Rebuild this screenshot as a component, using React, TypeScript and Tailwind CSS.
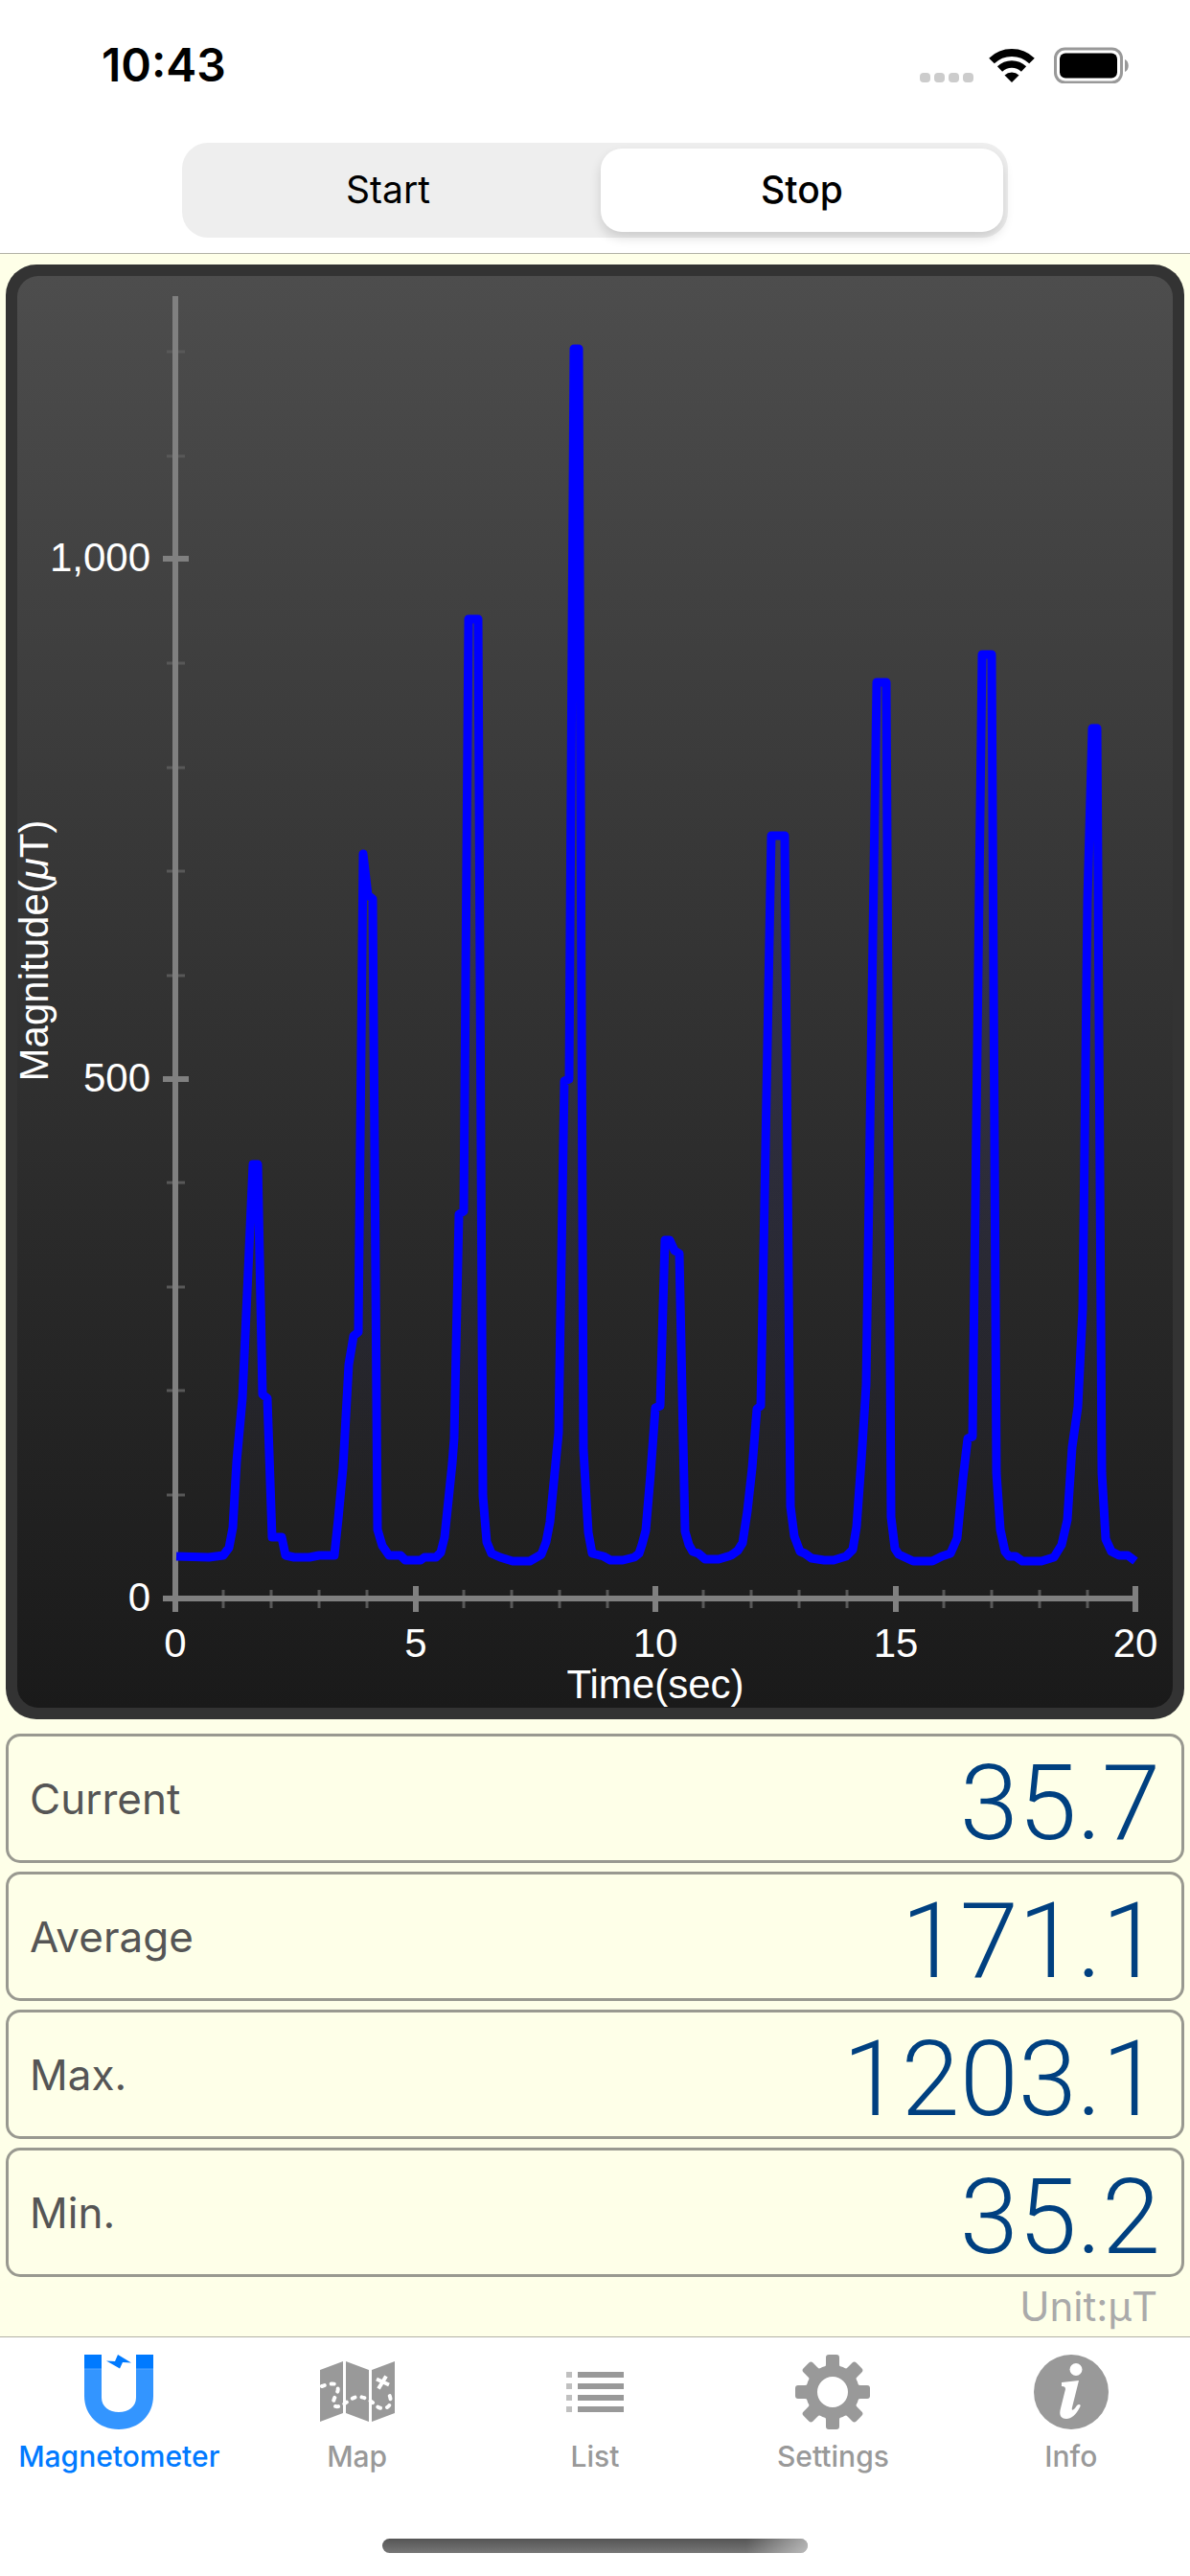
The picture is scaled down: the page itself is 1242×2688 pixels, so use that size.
import { useState } from "react";

// plot area: x 0..20s -> 184..1185, y 0..1000uT -> 1668..584
const line =
  "184,1624 218,1625 233,1623 239,1615 243,1594 247,1525 253,1459 264,1215 269,1215 274,1455 279,1459 284,1604 294,1604 298,1623 307,1625 323,1625 333,1623 349,1623 353,1585 358,1532 364,1424 369,1394 374,1390 379,891 384,934 389,938 394,1596 399,1613 406,1623 418,1623 423,1628 439,1628 443,1625 455,1625 460,1620 464,1604 472,1527 474,1501 479,1267 484,1264 489,646 499,646 504,1561 508,1609 513,1621 522,1625 535,1629 553,1629 565,1622 570,1609 574,1588 583,1495 589,1128 594,1126 599,364 604,364 609,1513 614,1599 618,1621 630,1624 637,1628 650,1628 662,1625 667,1621 670,1612 674,1597 679,1538 684,1469 689,1467 694,1294 699,1294 704,1305 709,1308 715,1598 719,1612 723,1619 729,1621 736,1627 750,1627 763,1623 770,1618 775,1610 780,1577 785,1532 790,1470 794,1467 805,872 819,872 825,1572 829,1603 835,1619 840,1621 847,1626 860,1628 870,1628 883,1624 890,1617 894,1593 899,1524 904,1445 915,712 925,712 930,1583 934,1616 938,1622 953,1629 973,1629 983,1624 992,1621 999,1605 1005,1543 1010,1501 1015,1499 1025,683 1035,683 1040,1537 1044,1596 1049,1619 1053,1624 1060,1624 1067,1629 1087,1629 1100,1625 1108,1612 1114,1586 1119,1510 1125,1468 1130,1366 1135,939 1140,760 1145,760 1150,1537 1154,1606 1160,1619 1168,1623 1177,1623 1185,1629";

const xTicks = [
  { x: 183, label: "0" }, { x: 434, label: "5" }, { x: 684, label: "10" }, { x: 935, label: "15" }, { x: 1185, label: "20" },
];
const yTicks = [
  { y: 1668, label: "0" }, { y: 1126, label: "500" }, { y: 583, label: "1,000" },
];

function Chart() {
  return (
    <svg viewBox="18 288 1206 1494" className="block w-full overflow-visible" role="img" aria-label="Magnitude over time">
      <defs>
        <linearGradient id="area" gradientUnits="userSpaceOnUse" x1="0" y1="360" x2="0" y2="1640">
          <stop offset="0" stopColor="#3030ff" stopOpacity="0.2" />
          <stop offset="1" stopColor="#3030ff" stopOpacity="0" />
        </linearGradient>
      </defs>
      {/* minor ticks */}
      <g stroke="#585858" strokeWidth="3">
        {Array.from({ length: 12 }, (_, i) => i + 1).filter((i) => i % 5).map((i) => {
          const y = Math.round(1668 - i * 108.4);
          return <line key={i} x1="174" x2="193" y1={y} y2={y} />;
        })}
        {Array.from({ length: 20 }, (_, i) => i).filter((i) => i % 5).map((i) => {
          const x = Math.round(183 + i * 50.1);
          return <line key={i} x1={x} x2={x} y1="1659" y2="1678" />;
        })}
      </g>
      {/* axes */}
      <g stroke="#808080" strokeWidth="6">
        <line x1="183" x2="183" y1="309" y2="1671" />
        <line x1="180" x2="1188" y1="1668" y2="1668" />
        {xTicks.map((t) => <line key={t.x} x1={t.x} x2={t.x} y1="1655" y2="1682" />)}
        {yTicks.map((t) => <line key={t.y} x1="170" x2="197" y1={t.y} y2={t.y} />)}
      </g>
      <polygon points={`184,1668 ${line} 1185,1668`} fill="url(#area)" />
      <polyline points={line} fill="none" stroke="#0000ff" strokeWidth="9" strokeLinejoin="round" />
      <g fill="#fff" fontSize="42" fontFamily="'Liberation Sans', Arial, sans-serif">
        {xTicks.map((t) => <text key={t.x} x={t.x} y="1729" textAnchor="middle">{t.label}</text>)}
        {yTicks.map((t) => <text key={t.y} x="157" y={t.y + 13} textAnchor="end">{t.label}</text>)}
        <text x="684" y="1772" textAnchor="middle">Time(sec)</text>
        <text transform="translate(50 992) rotate(-90)" textAnchor="middle">Magnitude(<tspan fontStyle="italic">μ</tspan>T)</text>
      </g>
    </svg>
  );
}

function MagnetIcon() {
  return (
    <svg width="72" height="78" viewBox="0 0 72 78">
      <path d="M0 0h18v15H0zM54 0h18v15H54z" fill="#007aff" />
      <path d="M0 15h18v30c0 9 8 15 18 15s18-6 18-15V15h18v28c0 20-15 35-36 35S0 63 0 43z" fill="#3395ff" />
      <path d="M0 15h18M54 15h18" stroke="#55a6ff" strokeWidth="1" />
      <path d="M35 0l14 8.500-9-.5-3 6.500-14-8 9 .5z" fill="#007aff" />
    </svg>
  );
}

function MapIcon() {
  return (
    <svg width="78" height="78" viewBox="0 0 78 78">
      <path d="M0 16L24 7v54L0 70zM27 7l24 9v54l-24-9zM54 16l24-9v54l-24 9z" fill="#999" />
      <path d="M2 33C8 31 19 27 18.700 36.500C18 42 14 45 14 50C14 55 18 55 22.700 53C28 50 33 44.500 39.500 44C46 44 51 47 55.500 50.500C59 53 60 56 65 56C72 56 74 52 73.500 46C73 42 71 40 69.700 37.500" fill="none" stroke="#fff" strokeWidth="4" strokeLinecap="round" strokeDasharray="3 7" />
      <path d="M59 25.500l13 6M69 22.500l-8 13" stroke="#fff" strokeWidth="4" />
    </svg>
  );
}

function ListIcon() {
  return (
    <svg width="60" height="78" viewBox="0 0 60 78">
      <path d="M0 18h6v6H0zM0 30h6v6H0zM0 42h6v6H0zM0 54h6v6H0z" fill="#c0c0c0" />
      <path d="M12 18h48v6H12zM12 30h48v6H12zM12 42h48v6H12zM12 54h48v6H12z" fill="#999" />
    </svg>
  );
}

function GearIcon() {
  return (
    <svg width="78" height="78" viewBox="0 0 78 78">
      <circle cx="39" cy="39" r="22" fill="none" stroke="#999" strokeWidth="12" />
      {[0, 45, 90, 135, 180, 225, 270, 315].map((a) => (
        <path key={a} d="M29 14q3-1 3-4V3q0-3 3-3h8q3 0 3 3v7q0 3 3 4l-4 4H33z" fill="#999" transform={`rotate(${a} 39 39)`} />
      ))}
    </svg>
  );
}

function InfoIcon() {
  return (
    <svg width="78" height="78" viewBox="0 0 78 78">
      <circle cx="39" cy="39" r="39" fill="#999" />
      <circle cx="44" cy="15.500" r="6.500" fill="#fff" />
      <path d="M29 29l18-2-7 28c-1 4 1 4 5-2 2-2 5-1 3 2-4 8-9 12-14 12-6 0-8-4-6-11l5-20c0-2-1-3-4-3z" fill="#fff" />
    </svg>
  );
}

const readings = [
  { label: "Current", value: "35.7" },
  { label: "Average", value: "171.1" },
  { label: "Max.", value: "1203.1" },
  { label: "Min.", value: "35.2" },
];

const tabs = [
  { label: "Magnetometer", icon: <MagnetIcon />, active: true },
  { label: "Map", icon: <MapIcon /> },
  { label: "List", icon: <ListIcon /> },
  { label: "Settings", icon: <GearIcon /> },
  { label: "Info", icon: <InfoIcon /> },
];

export default function App() {
  const [running, setRunning] = useState(false);
  const on = "bg-white font-medium shadow-[0_6px_12px_rgba(0,0,0,0.14)]";

  return (
    <div className="flex min-h-screen flex-col bg-white font-['Inter',sans-serif] text-black">
      <header className="border-b border-[#b2b2a6]">
        <div className="flex h-[136px] items-center justify-between pr-[62px] pl-[106px]">
          <span className="text-[48px] font-semibold">10:43</span>
          <div className="flex items-center">
            <svg width="56" height="38" viewBox="0 0 56 38" className="mr-4" fill="#ccc">
              {[0, 15, 30, 45].map((x) => <rect key={x} x={x} y="27" width="11" height="10" rx="4" />)}
            </svg>
            <svg width="48" height="38" viewBox="0 0 48 38" className="mr-5" fill="none" stroke="#000" strokeWidth="8">
              <path d="M3 14.500a30 30 0 0 1 42 0" />
              <path d="M11.500 23a18 18 0 0 1 25 0" strokeWidth="7.500" />
              <path d="M24 37l-7.500-7.500a11 11 0 0 1 15 0z" fill="#000" stroke="none" />
            </svg>
            <svg width="80" height="38" viewBox="0 0 80 38">
              <rect x="1.500" y="2" width="69" height="35" rx="10" fill="none" stroke="#999" strokeWidth="3" />
              <rect x="6" y="6.500" width="60" height="26" rx="6" />
              <path d="M74 13c5 2 5 11 0 13z" fill="#999" />
            </svg>
          </div>
        </div>
        <div className="mx-auto mt-[13px] mb-4 flex h-[99px] w-[69.4%] gap-3 rounded-[27px] bg-[#eee] px-[5px] py-1.5 text-[39px]">
          <button aria-pressed={running} onClick={() => setRunning(true)} className={`flex-1 rounded-[22px] ${running ? on : ""}`}>Start</button>
          <button aria-pressed={!running} onClick={() => setRunning(false)} className={`flex-1 rounded-[22px] ${running ? "" : on}`}>Stop</button>
        </div>
      </header>

      <main className="flex-1 bg-[#feffe8] px-1.5 pt-[11px]">
        <div className="rounded-[32px] bg-[#333] p-3">
          <div className="rounded-[22px] bg-linear-to-b from-[#4d4d4d] to-[#1a1a1a]">
            <Chart />
          </div>
        </div>
        <dl className="mt-[15px] flex flex-col gap-[9px]">
          {readings.map((r) => (
            <div key={r.label} className="flex h-[135px] items-center justify-between rounded-[15px] border-3 border-[#999990] pr-[22px] pl-[22px]">
              <dt className="text-[44px] text-[#555]">{r.label}</dt>
              <dd className="pt-2.5 font-['Roboto',sans-serif] text-[110px] leading-[110px] font-light text-[#004080]">{r.value}</dd>
            </div>
          ))}
        </dl>
        <p className="pr-7 text-right text-[42px] leading-[61px] text-[#aaa]">Unit:μT</p>
      </main>

      <footer className="border-t border-[#b2b2a6] pb-6">
        <nav className="flex pt-[18px]">
          {tabs.map((t) => (
            <a key={t.label} href="#" aria-current={t.active ? "page" : undefined} className={`flex flex-1 basis-0 flex-col items-center gap-[10px] text-[30px] leading-9 font-medium ${t.active ? "text-[#007aff]" : "text-[#999]"}`}>
              {t.icon}
              <span>{t.label}</span>
            </a>
          ))}
        </nav>
        <div className="mx-auto mt-[68px] h-[15px] w-[444px] overflow-hidden rounded-full bg-linear-to-b from-[#555] to-[#777]">
          <div className="ml-auto h-full w-16 bg-linear-to-r from-transparent to-white/50" />
        </div>
      </footer>
    </div>
  );
}
